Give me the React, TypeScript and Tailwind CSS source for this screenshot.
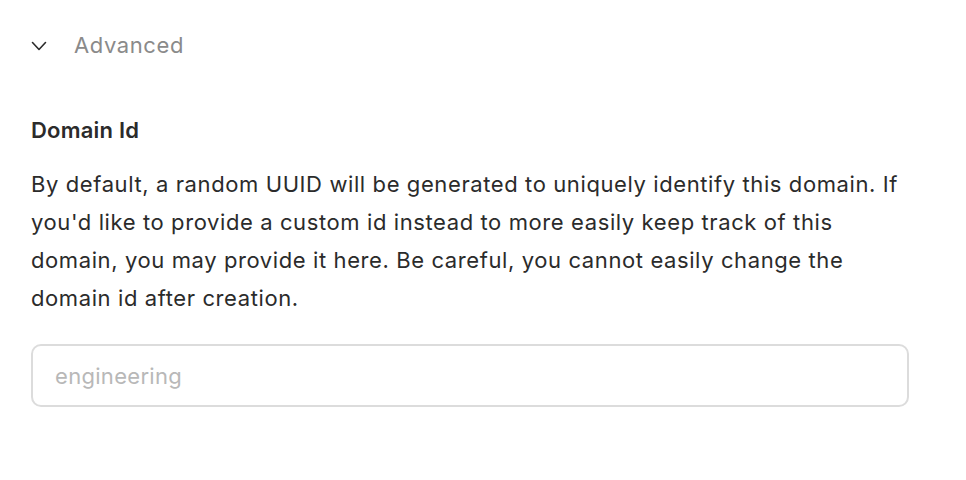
export default function App() {
  return (
    <main className="min-h-screen bg-white font-['Inter',sans-serif] text-[#2b2b2b]">
      <div className="w-[878px] pl-[31px] box-content pt-[29px]">
        <button className="flex items-center gap-[27px] text-[22px] tracking-[0.6px] text-[#8a8a8a]">
          <svg width="16" height="10" viewBox="0 0 16 10" fill="none" stroke="#2b2b2b" strokeWidth="1.6" strokeLinecap="round" strokeLinejoin="round">
            <path d="M1.5 1.5l6.5 7 6.5-7" />
          </svg>
          <span>Advanced</span>
        </button>

        <h3 className="mt-[53px] text-[22px] font-semibold leading-[30px] tracking-[0.2px]">Domain Id</h3>
        <p className="mt-[20px] text-[22px] leading-[38px] tracking-[0.6px]">
          By default, a random UUID will be generated to uniquely identify this domain. If you'd like to provide a
          custom id instead to more easily keep track of this domain, you may provide it here. Be careful, you cannot
          easily change the domain id after creation.
        </p>

        <input
          placeholder="engineering"
          className="mt-[27px] h-[63px] w-full rounded-[10px] border-2 border-[#dcdcdc] px-[22px] text-[22px] tracking-[0.3px] outline-none placeholder:text-[#b8b8b8]"
        />
      </div>
    </main>
  );
}
